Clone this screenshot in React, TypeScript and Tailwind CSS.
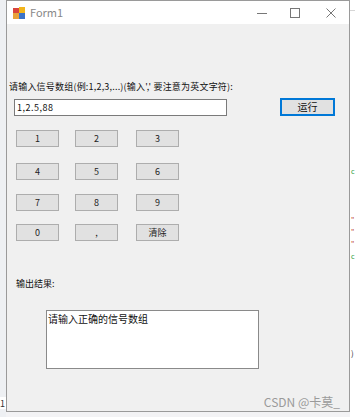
import React from "react";

const font = { fontFamily: '"Noto Sans CJK SC", "Liberation Sans", sans-serif' };

function WinButton({ label, className = "" }: { label: string; className?: string }) {
  return (
    <div
      className={`flex h-[17px] w-[43px] items-center justify-center border border-[#adadad] bg-[#e1e1e1] text-[9px] leading-none text-[#222] ${className}`}
    >
      {label}
    </div>
  );
}

const rows = [
  { keys: ["1", "2", "3"], mt: "mt-[14px]" },
  { keys: ["4", "5", "6"], mt: "mt-[16px]" },
  { keys: ["7", "8", "9"], mt: "mt-[14px]" },
  { keys: ["0", ",", "清除"], mt: "mt-[13px]" },
];

export default function App() {
  return (
    <div className="relative flex h-[417px] w-[355px] overflow-hidden bg-[#f3f3f5]" style={font}>
      {/* strip left of the window */}
      <div className="flex w-[6px] flex-col justify-end bg-[#eef0f3]">
        <div className="mb-[8px] flex h-[12px] items-center bg-white text-[9px] leading-none text-[#333]">1</div>
      </div>

      {/* Form1 window */}
      <div className="flex h-[412px] w-[344px] flex-col border border-[#9a9a9a] bg-[#f0f0f0]">
        <div className="flex h-[23px] items-center bg-white pl-[6px]">
          <svg width="12" height="12" viewBox="0 0 12 12">
            <rect x="0" y="1" width="6" height="5" fill="#d9443c" />
            <rect x="6" y="0" width="6" height="6" fill="#f2b51c" />
            <rect x="0" y="6" width="6" height="6" fill="#e8a23a" />
            <rect x="6" y="6" width="6" height="6" fill="#3b73c9" />
          </svg>
          <span className="ml-[5px] text-[11px] text-[#888]">Form1</span>
          <div className="ml-auto flex items-center">
            <svg width="12" height="12" viewBox="0 0 12 12" className="mr-[21px]">
              <line x1="1" y1="6.5" x2="11" y2="6.5" stroke="#777" strokeWidth="1" />
            </svg>
            <svg width="12" height="12" viewBox="0 0 12 12" className="mr-[24px]">
              <rect x="1.5" y="1.5" width="9" height="9" fill="none" stroke="#777" strokeWidth="1" />
            </svg>
            <svg width="12" height="12" viewBox="0 0 12 12" className="mr-[12px]">
              <path d="M1.5 1.5 L10.5 10.5 M10.5 1.5 L1.5 10.5" stroke="#777" strokeWidth="1" />
            </svg>
          </div>
        </div>

        <div className="flex flex-1 flex-col">
          <div className="ml-[2px] mt-[57px] text-[9px] leading-[12px] tracking-[0.2px] text-[#111]">
            请输入信号数组(例:1,2,3,...)(输入',' 要注意为英文字符):
          </div>

          <div className="mt-[5px] flex items-center">
            <div className="ml-[7px] flex h-[17px] w-[213px] items-center border border-[#7a7a7a] bg-white pl-[2px] text-[9px] leading-none tracking-[0.5px] text-[#111]">
              1,2.5,88
            </div>
            <div className="ml-[53px] flex h-[18px] w-[55px] items-center justify-center border-2 border-[#0078d7] bg-[#e1e1e1] text-[10px] leading-none text-[#111]">
              运行
            </div>
          </div>

          <div className="flex flex-col pl-[9px]">
            {rows.map((r) => (
              <div key={r.keys[0]} className={`flex ${r.mt}`}>
                <WinButton label={r.keys[0]} />
                <WinButton label={r.keys[1]} className="ml-[16px]" />
                <WinButton label={r.keys[2]} className="ml-[18px]" />
              </div>
            ))}
          </div>

          <div className="ml-[9px] mt-[37px] text-[9px] leading-[12px] text-[#111]">输出结果:</div>

          <div className="ml-[39px] mt-[20px] h-[59px] w-[213px] border border-[#8a8a8a] bg-white px-[1px] pt-[2px] text-[10px] leading-[12px] text-[#111]">
            请输入正确的信号数组
          </div>

          <div className="mr-[9px] mt-auto mb-[2px] text-right text-[12px] leading-[14px] text-[#9a9a9a]">
            CSDN @卡莫_
          </div>
        </div>
      </div>

      {/* strip right of the window */}
      <div className="relative flex-1 bg-white">
        <div className="absolute left-0 top-[10px] h-px w-full bg-[#d6d6d6]" />
        <span className="absolute left-[1px] top-[168px] text-[7px] leading-none text-[#2a9d3a]">c</span>
        <span className="absolute left-[1px] top-[216px] text-[7px] leading-none text-[#c0392b]">"</span>
        <span className="absolute left-[1px] top-[228px] text-[7px] leading-none text-[#c0392b]">"</span>
        <span className="absolute left-[1px] top-[240px] text-[7px] leading-none text-[#c0392b]">"</span>
        <span className="absolute left-[1px] top-[253px] text-[7px] leading-none text-[#2a9d3a]">c</span>
        <span className="absolute left-[1px] top-[349px] text-[8px] leading-none text-[#333]">)</span>
      </div>
    </div>
  );
}
